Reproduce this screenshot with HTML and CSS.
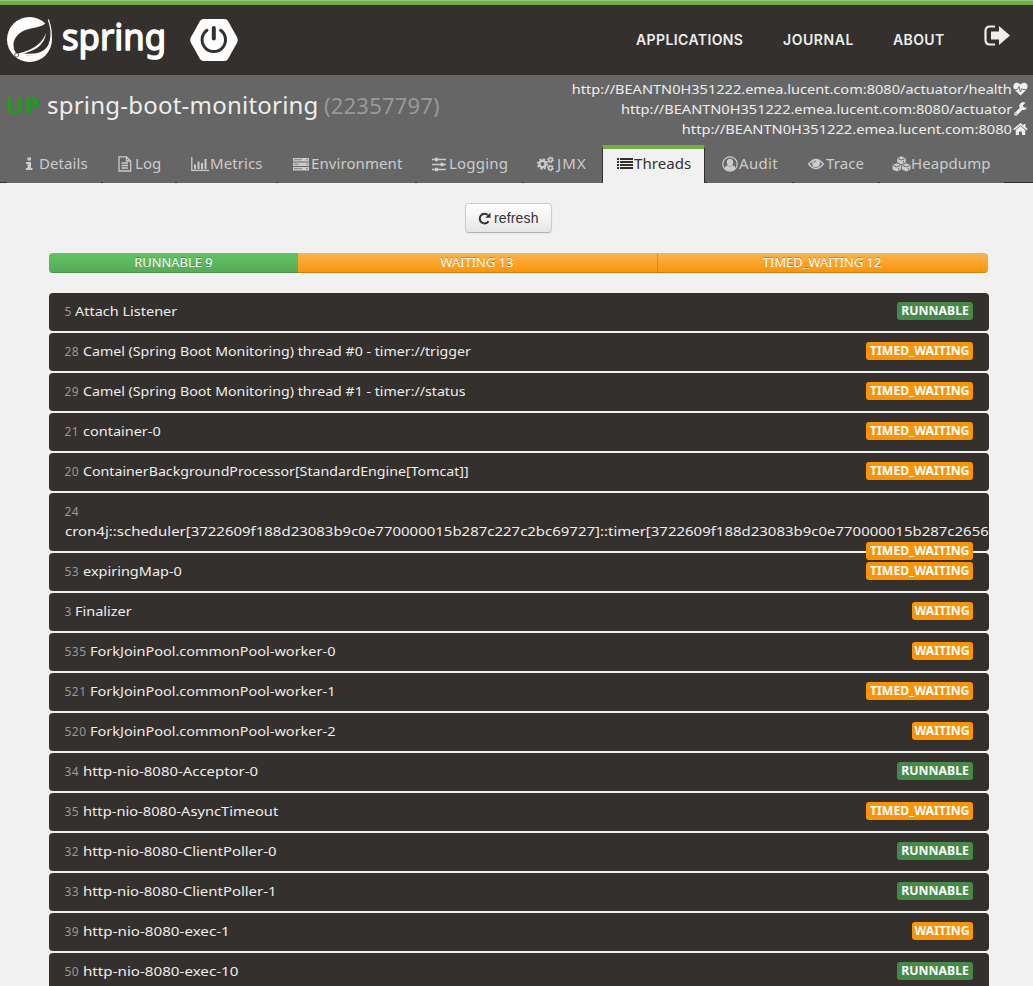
FILE: index.html
```
<!DOCTYPE html>
<html lang="en">
<head>
<meta charset="utf-8">
<title>Spring Boot Admin</title>
<link rel="stylesheet" href="styles.css">
</head>
<body>
<header class="topbar">
  <svg class="logo" width="240" height="56" viewBox="0 0 240 56" role="img">
    <circle cx="29.500" cy="29.500" r="22.500" fill="#fff"/>
    <path d="M48.300 9.500C45 17 37 17 29 19C19 21.500 13 28 13.500 36C13.800 39 15 42 16.500 44C26 45 33 46.500 40 44C51 39 53.500 25 48.300 9.500Z" fill="#34302d"/>
    <path d="M18.500 43.500C32 40 42 34.500 46 23C44.500 35 36 40 24 43.500C34 44 42 44 48 36C44 46 38 46.500 30 45.500C25 44.500 21 45 17 45.500Z" fill="#fff"/>
    <path d="M48.300 9.500C54 25 51 39 40 43.500" fill="none" stroke="#fff" stroke-width="1.200"/>
    <circle cx="16.500" cy="45" r="2" fill="#fff" stroke="#34302d" stroke-width=".7"/>
    <text class="logo-word" x="62" y="40" textLength="104" lengthAdjust="spacingAndGlyphs">spring</text>
    <path d="M203.500 9H224.500Q226.800 9 228 11L237.200 27.500Q238.500 30 237.200 32.500L228 49Q226.800 51 224.500 51H203.500Q201.200 51 200 49L190.800 32.500Q189.500 30 190.800 27.500L200 11Q201.200 9 203.500 9Z" fill="#fff"/>
    <path d="M207 20.300A11.700 11.700 0 1 0 220.600 20.300" fill="none" stroke="#34302d" stroke-width="3" stroke-linecap="round"/>
    <path d="M213.800 18V28.500" fill="none" stroke="#34302d" stroke-width="4" stroke-linecap="round"/>
  </svg>
  <nav class="topnav">
    <a class="nav-app">APPLICATIONS</a>
    <a class="nav-journal">JOURNAL</a>
    <a class="nav-about">ABOUT</a>
    <svg class="signout" width="26" height="22" viewBox="0 0 26 22"><path d="M11 1.500H6Q1.500 1.500 1.500 6V15Q1.500 19.500 6 19.500H11" fill="none" stroke="#eee" stroke-width="2.200"/><path d="M7 6.500H15V1L26 10.500L15 20V14.500H7Z" fill="#eee"/></svg>
  </nav>
</header>

<section class="instance">
  <div class="instance-head">
    <h1 class="title"><b class="up">UP</b><span class="name">spring-boot-monitoring</span><span class="id">(22357797)</span></h1>
    <div class="links">
      <div class="link l1"><span>http://BEANTN0H351222.emea.lucent.com:8080/actuator/health</span><svg width="15" height="14" viewBox="0 0 15 14"><path d="M7.500 13.500L1.500 7.500C-2 3 3-2 7.500 2.500C12-2 17 3 13.500 7.500Z" fill="#eee"/><path d="M1.500 7.500H4.500L6 4.500L7.500 10L9 6.500L10 7.500H13.500" fill="none" stroke="#666" stroke-width=".9"/></svg></div>
      <div class="link l2"><span>http://BEANTN0H351222.emea.lucent.com:8080/actuator</span><svg width="15" height="14" viewBox="0 0 15 14"><path d="M2.800 12L9 6" stroke="#eee" stroke-width="3.200" stroke-linecap="round"/><path d="M12.500.8A4 4 0 1 0 14 5.500L11 5.500L9.800 3.500Z" fill="#eee"/><circle cx="3" cy="11.700" r=".6" fill="#666"/></svg></div>
      <div class="link l3"><span>http://BEANTN0H351222.emea.lucent.com:8080</span><svg width="15" height="14" viewBox="0 0 15 14"><path d="M.8 7.700L7.500 2L14.200 7.700M11.500 2V5" fill="none" stroke="#eee" stroke-width="1.700"/><path d="M2.800 8L7.500 4L12.200 8V13H9V9.500H6V13H2.800Z" fill="#eee"/></svg></div>
    </div>
  </div>
  <nav class="tabs">
    <a class="tab t-details"><svg width="10" height="16" viewBox="0 0 10 16"><path d="M2.500 1.500H6V4.500H2.500ZM1 6H6V12H7.500V14H1V12H2.500V8H1Z" fill="currentColor"/></svg><span>Details</span></a>
    <a class="tab t-log"><svg width="14" height="16" viewBox="0 0 14 16"><path d="M1 .8H8.500L12.700 5V15H1ZM8.500 1V5H12.500M3.500 7H10M3.500 9.500H10M3.500 12H10" fill="none" stroke="currentColor" stroke-width="1.300"/></svg><span>Log</span></a>
    <a class="tab t-metrics"><svg width="18" height="16" viewBox="0 0 18 16"><path d="M.8 1V14.300H18" fill="none" stroke="currentColor" stroke-width="1.300"/><path d="M3 8.500H5V13H3ZM6.500 5.500H8.500V13H6.500ZM10 7H12V13H10ZM13.500 3H15.500V13H13.500Z" fill="currentColor"/></svg><span>Metrics</span></a>
    <a class="tab t-env"><svg width="16" height="16" viewBox="0 0 16 16"><path d="M0 2H16V5.500H0ZM0 6.500H16V10H0ZM0 11H16V14.500H0Z" fill="currentColor"/><path d="M1 3.700H9M1 8.200H6M1 12.700H9M13 3.700H15M13 8.200H15M13 12.700H15" stroke="#666" stroke-width=".7"/></svg><span>Environment</span></a>
    <a class="tab t-logging"><svg width="14" height="16" viewBox="0 0 14 16"><path d="M0 3.500H14M0 8.500H14M0 13.500H14" stroke="currentColor" stroke-width="1.300"/><path d="M3 1.800H6V5.200H3ZM8.500 6.800H11.500V10.200H8.500ZM3 11.800H6V15.200H3Z" fill="currentColor"/></svg><span>Logging</span></a>
    <a class="tab t-jmx"><svg width="17" height="16" viewBox="0 0 17 16"><circle cx="5.500" cy="8" r="3.200" fill="none" stroke="currentColor" stroke-width="2.400"/><circle cx="5.500" cy="8" r="4.900" fill="none" stroke="currentColor" stroke-width="1.500" stroke-dasharray="2.200 1.650"/><circle cx="13.500" cy="3.800" r="1.900" fill="none" stroke="currentColor" stroke-width="1.500"/><circle cx="13.500" cy="3.800" r="2.900" fill="none" stroke="currentColor" stroke-dasharray="1.500 1.500"/><circle cx="13.500" cy="12" r="1.900" fill="none" stroke="currentColor" stroke-width="1.500"/><circle cx="13.500" cy="12" r="2.900" fill="none" stroke="currentColor" stroke-dasharray="1.500 1.500"/></svg><span>JMX</span></a>
    <a class="tab t-threads active"><svg width="16" height="16" viewBox="0 0 16 16"><path d="M0 3H2M3 3H16M0 6H2M3 6H16M0 9H2M3 9H16M0 12H2M3 12H16" stroke="currentColor" stroke-width="2"/></svg><span>Threads</span></a>
    <a class="tab t-audit"><svg width="16" height="16" viewBox="0 0 16 16"><circle cx="8" cy="8" r="7.200" fill="none" stroke="currentColor" stroke-width="1.200"/><ellipse cx="8" cy="6.500" rx="3.200" ry="3.700" fill="currentColor"/><path d="M2.500 12.500Q3.200 9.500 5.500 9.500Q8 11.500 10.500 9.500Q13 9.500 13.500 12.500Q8 17.500 2.500 12.500Z" fill="currentColor"/></svg><span>Audit</span></a>
    <a class="tab t-trace"><svg width="16" height="16" viewBox="0 0 16 16"><path d="M.7 8Q8-1 15.300 8Q8 17 .7 8Z" fill="none" stroke="currentColor" stroke-width="1.300"/><circle cx="8" cy="7.200" r="3.900" fill="currentColor"/><path d="M5.800 7Q6 5 8 4.800" fill="none" stroke="#666" stroke-width=".9"/></svg><span>Trace</span></a>
    <a class="tab t-heap"><svg width="19" height="16" viewBox="0 0 19 16"><g fill="currentColor" stroke="#666" stroke-width=".5"><path d="M9.500 0L14 2V6.500L9.500 8.700L5 6.500V2Z"/><path d="M4.700 7L9.300 9V13.500L4.700 15.700L.2 13.500V9Z"/><path d="M14.300 7L18.800 9V13.500L14.300 15.700L9.700 13.500V9Z"/></g><path d="M6 2.500L9.500 4L13 2.500M1.300 9.500L4.700 11L8.200 9.500M10.800 9.500L14.300 11L17.700 9.500M11.500 5V6.500M6.700 12V13.500M16.300 12V13.500" fill="none" stroke="#666" stroke-width="1"/></svg><span>Heapdump</span></a>
  </nav>
</section>

<main class="content">
  <button class="refresh"><svg width="13" height="13" viewBox="0 0 13 13"><path d="M10.600 9.200A4.800 4.800 0 1 1 9.800 3.100" fill="none" stroke="#333" stroke-width="2"/><path d="M12.500.5V5.700H7.300Z" fill="#333"/></svg><span>refresh</span></button>
  <div class="progress">
    <div class="bar runnable"><span>RUNNABLE 9</span></div>
    <div class="bar waiting"><span>WAITING 13</span></div>
    <div class="bar timed"><span>TIMED_WAITING 12</span></div>
  </div>
  <div class="threads">
    <div class="row"><p><small>5</small> <span class="wide">Attach Listener</span></p><b class="badge green"><span>RUNNABLE</span></b></div>
    <div class="row"><p><small>28</small> <span>Camel (Spring Boot Monitoring) thread #0 - timer://trigger</span></p><b class="badge long"><span>TIMED_WAITING</span></b></div>
    <div class="row"><p><small>29</small> <span>Camel (Spring Boot Monitoring) thread #1 - timer://status</span></p><b class="badge long"><span>TIMED_WAITING</span></b></div>
    <div class="row"><p><small>21</small> <span class="wide">container-0</span></p><b class="badge long"><span>TIMED_WAITING</span></b></div>
    <div class="row"><p><small>20</small> <span>ContainerBackgroundProcessor[StandardEngine[Tomcat]]</span></p><b class="badge long"><span>TIMED_WAITING</span></b></div>
    <div class="row tall"><p><small>24</small><br><span class="cron">cron4j::scheduler[3722609f188d23083b9c0e770000015b287c227c2bc69727]::timer[3722609f188d23083b9c0e770000015b287c2656</span></p><b class="badge long"><span>TIMED_WAITING</span></b></div>
    <div class="row"><p><small>53</small> <span class="wide">expiringMap-0</span></p><b class="badge long"><span>TIMED_WAITING</span></b></div>
    <div class="row"><p><small>3</small> <span class="wide">Finalizer</span></p><b class="badge short"><span>WAITING</span></b></div>
    <div class="row"><p><small>535</small> <span class="wide">ForkJoinPool.commonPool-worker-0</span></p><b class="badge short"><span>WAITING</span></b></div>
    <div class="row"><p><small>521</small> <span class="wide">ForkJoinPool.commonPool-worker-1</span></p><b class="badge long"><span>TIMED_WAITING</span></b></div>
    <div class="row"><p><small>520</small> <span class="wide">ForkJoinPool.commonPool-worker-2</span></p><b class="badge short"><span>WAITING</span></b></div>
    <div class="row"><p><small>34</small> <span class="wider">http-nio-8080-Acceptor-0</span></p><b class="badge green"><span>RUNNABLE</span></b></div>
    <div class="row"><p><small>35</small> <span class="async">http-nio-8080-AsyncTimeout</span></p><b class="badge long"><span>TIMED_WAITING</span></b></div>
    <div class="row"><p><small>32</small> <span class="wider">http-nio-8080-ClientPoller-0</span></p><b class="badge green"><span>RUNNABLE</span></b></div>
    <div class="row"><p><small>33</small> <span class="wider">http-nio-8080-ClientPoller-1</span></p><b class="badge green"><span>RUNNABLE</span></b></div>
    <div class="row"><p><small>39</small> <span class="widest">http-nio-8080-exec-1</span></p><b class="badge short"><span>WAITING</span></b></div>
    <div class="row"><p><small>50</small> <span class="widest">http-nio-8080-exec-10</span></p><b class="badge green"><span>RUNNABLE</span></b></div>
  </div>
</main>
</body>
</html>
```
FILE: styles.css
```
* { box-sizing: border-box; }
html, body { margin: 0; height: 986px; overflow: hidden; }
body { background: #f1f1f1; font: 13px/20px "Noto Sans", sans-serif; color: #eee; }

.topbar { height: 75px; background: linear-gradient(#98c37a 1px, #70ad47 1px, #70ad47 5px, #34302d 5px); padding-top: 5px; display: flex; justify-content: space-between; }
.logo { margin-top: 5px; display: block; }
.logo-word { font: 36px "Noto Sans", sans-serif; fill: #fff; stroke: #fff; stroke-width: 1.5px; stroke-linejoin: round; }
.topnav { display: flex; align-items: flex-start; padding: 25px 23px 0 0; font: 600 14px/20px Inter, sans-serif; letter-spacing: .4px; }
.nav-app { width: 147px; }
.nav-journal { width: 110px; letter-spacing: .55px; }
.nav-about { width: 91px; }
.signout { margin-top: -5px; }

.instance { height: 108px; background: #666; display: flex; flex-direction: column; justify-content: space-between; }
.instance-head { display: flex; justify-content: space-between; }
.title { margin: 10px 0 0 6px; font-size: 24px; line-height: 40px; font-weight: 400; display: flex; white-space: nowrap; }
.up { width: 41px; color: #18a018; letter-spacing: .5px; }
.name { width: 277px; letter-spacing: .22px; }
.id { color: #999; font-size: 22px; letter-spacing: .2px; }
.links { padding: 4px 5px 0 0; }
.link { display: flex; justify-content: flex-end; align-items: center; height: 20px; white-space: nowrap; }
.link span { transform: scaleX(1.12); transform-origin: right; }
.l3 span { transform: scaleX(1.127); }
.link svg { margin-left: 1px; }

.tabs { display: flex; gap: 2px; height: 38px; padding-left: 7px; background: linear-gradient(#34302d, #34302d) bottom / 100% 1px no-repeat; font-size: 15px; }
.tab { display: flex; align-items: center; height: 38px; padding: 0 0 2px 15px; background: #666; color: #ccc; white-space: nowrap; }
.tab svg { flex: none; position: relative; top: 1px; }
.tab span { letter-spacing: .08px; }
.t-details { width: 94px; padding-left: 18px; }
.t-details svg { margin-right: 4px; }
.t-log { width: 72px; }
.t-log svg { margin-right: 3px; }
.t-metrics { width: 99px; padding-left: 14px; }
.t-metrics svg { margin-right: 1px; }
.t-env { width: 137px; }
.t-env svg { margin-right: 2px; }
.t-logging { width: 105px; padding-left: 15px; }
.t-logging svg { margin-right: 3px; }
.t-logging span { letter-spacing: .2px; }
.t-jmx { width: 78px; padding-left: 13px; }
.t-jmx svg { margin-right: 3px; }
.t-jmx span { letter-spacing: 1.2px; }
.tab.active { margin-left: -2px; width: 103px; padding: 0 0 6px 14px; background: #f1f1f1; color: #34302d; border: solid #34302d; border-width: 0 1px; border-top: 4px solid #70ad47; }
.t-threads svg { margin-right: 1px; }
.t-audit { width: 85px; }
.t-audit svg { margin-right: 1px; }
.t-audit span { letter-spacing: .3px; }
.t-trace { width: 84px; padding-left: 14px; }
.t-trace svg { margin-right: 2px; }
.t-heap { width: 124px; padding-left: 12px; }

.content { padding: 20px 0 0 49px; width: 989px; }
.refresh { display: flex; align-items: center; gap: 3px; width: 87px; height: 30px; margin: 0 0 20px 416px; padding: 0 0 0 12px; border: 1px solid #ccc; border-bottom-color: #b3b3b3; border-radius: 4px; background: linear-gradient(#fff, #e6e6e6); box-shadow: 0 1px 2px rgba(0,0,0,.05); font: 14px/20px "Liberation Sans", sans-serif; letter-spacing: .15px; color: #333; }
.progress { display: flex; width: 939px; height: 20px; margin-bottom: 20px; border-radius: 4px; overflow: hidden; font-size: 12px; text-shadow: 0 -1px 0 rgba(0,0,0,.25); text-align: center; color: #fff; }
.bar { background: linear-gradient(#fbb450, #f89406); box-shadow: inset 0 -1px 0 rgba(0,0,0,.15); }
.bar span { display: inline-block; transform: scaleX(1.075); }
.runnable { width: 248.500px; background: linear-gradient(#62c462, #57a957); }
.waiting { width: 359.500px; }
.timed { width: 331px; box-shadow: inset 1px 0 0 rgba(0,0,0,.15), inset 0 -1px 0 rgba(0,0,0,.15); }

.threads { display: flex; flex-direction: column; gap: 2px; }
.row { position: relative; flex: none; height: 38px; padding: 9px 16px 0 15.500px; border-radius: 4px; background: #34302d; display: flex; justify-content: space-between; align-items: flex-start; white-space: nowrap; }
.row p { margin: -1px 0 0; }
.row p span { display: inline-block; transform: scaleX(1.091); transform-origin: left; }
.row p .wide { transform: scaleX(1.114); }
.row p .async { transform: scaleX(1.128); }
.row p .wider { transform: scaleX(1.147); }
.row p .cron { transform: scaleX(1.151); }
.row p .widest { transform: scaleX(1.166); }
.row small { font-size: 12px; line-height: 1; color: #999; letter-spacing: .45px; }
.badge { height: 18px; border-radius: 3px; background: #f89406; color: #fff; text-align: center; font-size: 12px; line-height: 18px; flex: none; }
.badge span { display: inline-block; transform: scaleX(1.02); }
.green { width: 76px; background: #468847; }
.long { width: 107px; }
.short { width: 61px; }
.tall { height: 58px; }
.tall .badge { position: absolute; right: 16px; top: 49px; z-index: 1; }
```
